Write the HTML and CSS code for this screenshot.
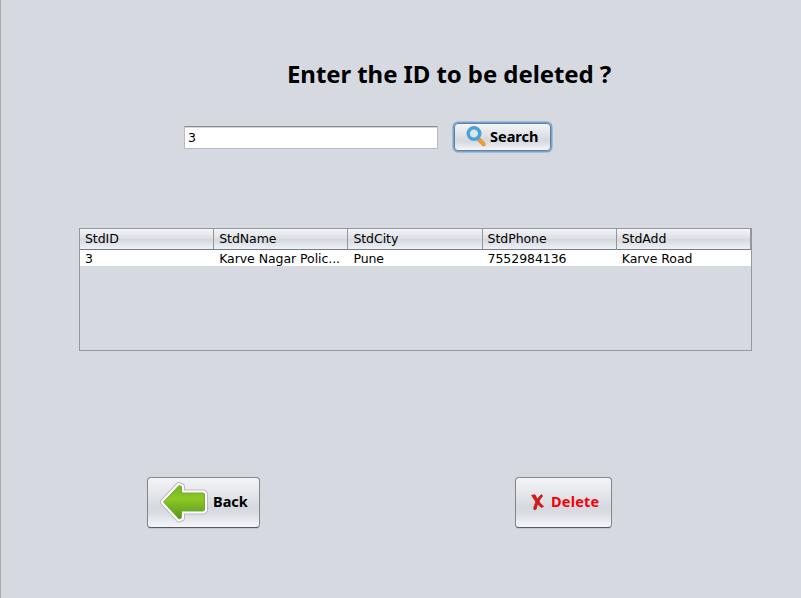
FILE: index.html
```html
<!DOCTYPE html>
<html lang="en">
<head>
<meta charset="utf-8">
<title>Delete student</title>
<link rel="stylesheet" href="styles.css">
</head>
<body>
<main class="panel">
  <h1 class="title">Enter the ID to be deleted ?</h1>
  <form class="search-row">
    <input class="id-field" type="text" value="3">
    <button class="btn search" type="button">
      <svg class="icon-search" width="20" height="21" viewBox="0 0 20 21">
        <path d="M13 13.5L17.500 18.2" stroke="#c98a3c" stroke-width="4" stroke-linecap="round"/>
        <path d="M13 13.3L17.500 18" stroke="#f7a02b" stroke-width="2.8" stroke-linecap="round"/>
        <path d="M11 11L13.5 13.5" stroke="#8899a5" stroke-width="2.5"/>
        <circle cx="8" cy="7.5" r="5.8" fill="#dce5ed" stroke="#7f9db0" stroke-width="3.5"/>
        <circle cx="8" cy="7.5" r="5.7" fill="none" stroke="#3ca8df" stroke-width="2.6"/>
      </svg>
      <span>Search</span>
    </button>
  </form>
  <section class="table-pane">
    <table class="records">
      <thead><tr><th>StdID</th><th>StdName</th><th>StdCity</th><th>StdPhone</th><th>StdAdd</th></tr></thead>
      <tbody><tr><td>3</td><td>Karve Nagar Polic...</td><td>Pune</td><td>7552984136</td><td>Karve Road</td></tr></tbody>
    </table>
  </section>
  <footer class="actions">
    <button class="btn back" type="button">
      <svg width="50" height="44" viewBox="0 0 50 44">
        <defs><linearGradient id="green" x1="0" y1="0" x2="0" y2="1">
          <stop offset="0" stop-color="#72b51d"/><stop offset=".4" stop-color="#8cc924"/><stop offset="1" stop-color="#589322"/>
        </linearGradient></defs>
        <g stroke-linejoin="round">
          <path d="M3.500 21L19 4.500L21.500 5.500V12H43.500L44.500 13V29L43.500 30H21.500V37L19 38Z" fill="#b9babd" stroke="#b9babd" stroke-width="7"/>
          <path d="M3.500 21L19 4.500L21.500 5.500V12H43.500L44.500 13V29L43.500 30H21.500V37L19 38Z" fill="#fff" stroke="#fff" stroke-width="5"/>
          <path d="M3.500 21L19 4.500L21.500 5.500V12H43.500L44.500 13V29L43.500 30H21.500V37L19 38Z" fill="url(#green)" stroke="#75aa33" stroke-width="1"/>
        </g>
      </svg>
      <span>Back</span>
    </button>
    <button class="btn delete" type="button">
      <svg width="14" height="17" viewBox="0 0 14 17">
        <path d="M.6 1.300L4 .8C6 5 8.500 9 12.600 12.400L10.500 13.500C6.500 10.800 3.800 6.500 .6 1.300Z" fill="#e01414" stroke="#c62020" stroke-width=".8"/>
        <path d="M8.800 2L10.500 .6L11.600 2C8.300 6 6 10.500 5.200 15L3.200 16L2.700 14C3.800 9.500 5.700 5.500 8.800 2Z" fill="#e01414" stroke="#b02828" stroke-width=".8"/>
      </svg>
      <span>Delete</span>
    </button>
  </footer>
</main>
</body>
</html>
```
FILE: styles.css
```css
* { box-sizing: border-box; }
body { margin: 0; background: #d6d9e0; color: #000; }
.panel {
  width: 801px;
  height: 598px;
  padding: 58px 0 0;
  border-left: 1px solid #a9abaf;
  overflow: hidden;
}
.title {
  margin: 0 0 0 286px;
  height: 32px;
  font: bold 24px/32px "Noto Sans", sans-serif;
  letter-spacing: -.08px;
  white-space: nowrap;
}
.search-row { display: flex; align-items: flex-start; height: 32px; margin: 31px 0 0 183px; }
.id-field {
  width: 254px;
  height: 23px;
  margin: 5px 15px 0 0;
  padding: 0 3px 1px;
  border: 1px solid #b9bbc0;
  border-top: 1px solid #8b8d92;
  box-shadow: inset 0 1px #d5d6d8;
  border-radius: 0;
  outline: 0;
  background: #fff;
  font: 12.500px "DejaVu Sans", sans-serif;
}
.btn {
  display: flex;
  align-items: center;
  padding: 0;
  border: 1px solid #85888e;
  border-bottom-color: #55585e;
  border-radius: 4px;
  background: linear-gradient(#f3f4f6, #e3e5e9 35%, #d6d9df 58%, #d8dbe2 70%, #f4f6fa);
  box-shadow: 0 1px 1px #bfc2c8;
  color: #000;
  font: bold 14.500px "Noto Sans", sans-serif;
  white-space: nowrap;
}
.btn span { padding-bottom: 3px; }
.search {
  width: 97px;
  height: 28px;
  margin-top: 2px;
  margin-left: 1px;
  padding-left: 11px;
  gap: 4px;
  border-color: #64809c;
  box-shadow: 0 0 0 1.500px #73a4d1;
}
.search svg { margin-bottom: 1px; }
.table-pane {
  width: 673px;
  height: 123px;
  margin: 75px 0 0 78px;
  border: 1px solid #9297a1;
}
.records {
  width: 671px;
  table-layout: fixed;
  border-collapse: separate;
  border-spacing: 0;
  font: 12.500px "DejaVu Sans", sans-serif;
  letter-spacing: -.06px;
}
.records th {
  height: 21px;
  padding: 0 0 1px 5px;
  border-right: 1px solid #93969c;
  border-bottom: 1px solid #777d88;
  background: linear-gradient(#f3f5f8, #dddfe3 48%, #d5d8dc 52%, #eef1f5);
  font-weight: normal;
  line-height: 18px;
  text-align: left;
}
.records td {
  height: 16px;
  padding: 1px 0 0 5px;
  background: #fff;
  line-height: 15px;
  white-space: nowrap;
}
.actions { display: flex; gap: 255px; margin: 126px 0 0 146px; }
.back { width: 113px; height: 51px; padding-left: 12px; gap: 3px; }
.delete { width: 97px; height: 51px; padding-left: 15px; gap: 6px; color: #f60008; letter-spacing: .2px; }
```
